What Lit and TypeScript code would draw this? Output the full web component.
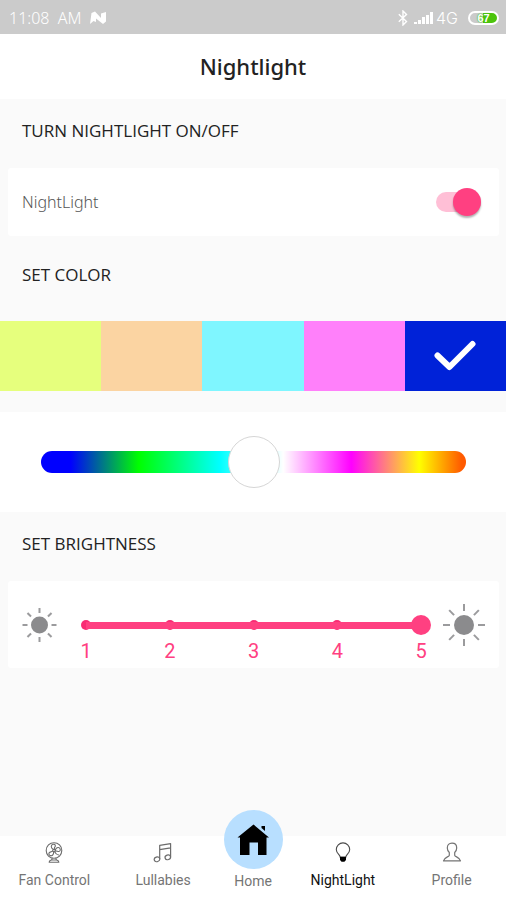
import { LitElement, html, svg, css } from "lit";
import { customElement, state } from "lit/decorators.js";
import { classMap } from "lit/directives/class-map.js";

const ray = (angle: number, inner: number, outer: number) => {
  const a = (angle * Math.PI) / 180;
  return svg`<line x1=${Math.cos(a) * inner} y1=${Math.sin(a) * inner} x2=${Math.cos(a) * outer} y2=${Math.sin(a) * outer}></line>`;
};

const sun = (size: number, core: number, inner: number, outer: number) => html`
  <svg class="sun" width=${size} height="44" viewBox="${-size / 2} -22 ${size} 44" aria-hidden="true">
    <circle r=${core} fill="#8b8b8d"></circle>
    <g stroke="#9b9b9d" stroke-width="2">
      ${[0, 45, 90, 135, 180, 225, 270, 315].map((a) => ray(a, inner, outer))}
    </g>
  </svg>
`;

const icons = {
  fan: svg`
    <g fill="none" stroke="#6c6c6c" stroke-width="1.1" stroke-linejoin="round" stroke-linecap="round">
      <circle cx="10" cy="8.5" r="7.8"></circle>
      <circle cx="10" cy="8.5" r="1.3"></circle>
      <path d="M9.2 7.4C6.4 5.6 6.8 2.6 9.4 2.2c2-.2 2.6 1.8 1.2 3.2L10.3 7.2"></path>
      <path d="M11.2 8c1.2-3 4.2-3.2 5-1 .6 1.9-1 2.9-2.8 2.2L11.3 8.9"></path>
      <path d="M9.6 9.8c.4 3.2-2 4.8-3.9 3.5-1.6-1.2-.8-3 1-3.4l2.1-.8"></path>
      <path d="M10.6 9.8c1 2 2.4 3 4 3.2"></path>
      <path d="M8.2 16.2 7.6 18M11.8 16.2l.6 1.8M5.2 20.3c.2-1.6 1.2-2.3 2.6-2.3h4.4c1.4 0 2.4.7 2.6 2.3z"></path>
    </g>`,
  notes: svg`
    <g fill="none" stroke="#6c6c6c" stroke-width="1.2" stroke-linejoin="round">
      <ellipse cx="4" cy="17.3" rx="2.8" ry="2.3" transform="rotate(-20 4 17.3)"></ellipse>
      <ellipse cx="14.8" cy="15.3" rx="2.8" ry="2.3" transform="rotate(-20 14.8 15.3)"></ellipse>
      <path d="M6.7 17V3.4L17.6 1.6V15M6.7 7.6 17.6 5.8"></path>
    </g>`,
  bulb: svg`
    <path d="M7.2 15.2C7 12.4 3.3 11.6 3.3 7.6a6.7 6.7 0 0 1 13.4 0c0 4-3.7 4.8-3.9 7.6z" fill="none" stroke="#4a4a4a" stroke-width="1.1"></path>
    <path d="M7 14.8h6v3.2l-1.6 1.8H8.6L7 18z" fill="#000"></path>`,
  person: svg`
    <path d="M10 1.2c-3 0-4.7 2-4.7 4.7 0 2 .8 3.4 2 4.6v2.8c-.3 1.5-5 2-5.8 5.500h17c-.8-3.500-5.500-4-5.800-5.500v-2.800c1.200-1.200 2-2.600 2-4.600 0-2.700-1.700-4.700-4.700-4.700z" fill="none" stroke="#747474" stroke-width="1.2" stroke-linejoin="round"></path>`,
};

type Icon = keyof typeof icons;

@customElement("app-root")
export class AppRoot extends LitElement {
  static styles = css`
    :host {
      display: block;
      font-family: "Noto Sans", sans-serif;
      color: #222;
    }
    * {
      box-sizing: border-box;
    }
    input {
      appearance: none;
      -webkit-appearance: none;
      margin: 0;
      background: none;
    }
    svg {
      display: block;
      flex: none;
    }
    .page {
      display: flex;
      flex-direction: column;
      min-height: 100vh;
      background: #fafafa;
    }

    .status {
      display: flex;
      align-items: center;
      height: 34px;
      padding: 2px 7px 0 9px;
      background: #cbcbcb;
      color: #fff;
      font-size: 16px;
      line-height: 20px;
    }
    .clock {
      margin-right: 9px;
      font-weight: 300;
      white-space: pre;
    }
    .spacer {
      flex: 1;
    }
    .signal {
      margin: 0 3px 0 6px;
    }
    .network {
      font-family: Inter, sans-serif;
      font-weight: 300;
      margin-right: 10px;
    }
    .battery {
      width: 31px;
      height: 14px;
      border: 2px solid #fff;
      border-radius: 7px;
      background: linear-gradient(90deg, #cbcbcb 13px, #4cc40c 13px);
      font: 700 11px/10px "Liberation Sans", sans-serif;
      text-align: center;
      text-shadow: 0 0 1px #4cc40c, 0 0 2px #4cc40c;
    }

    .header {
      display: flex;
      align-items: center;
      justify-content: center;
      height: 65px;
      padding-bottom: 2px;
      background: #fff;
    }
    .title {
      margin: 0;
      font-size: 22px;
      line-height: 30px;
      font-weight: 500;
    }
    .heading {
      margin: 0;
      padding: 19px 22px 0;
      font-size: 17px;
      line-height: 25px;
      font-weight: 400;
      font-family: "Open Sans", sans-serif;
    }
    .card {
      margin: 0 7px 0 8px;
      background: #fff;
      border-radius: 3px;
    }

    .toggle {
      display: flex;
      align-items: center;
      justify-content: space-between;
      height: 68px;
      margin-top: 25px;
      margin-bottom: 7px;
      padding: 0 18px 0 14px;
    }
    .toggle-label {
      font-size: 16px;
      line-height: 24px;
      font-weight: 300;
      color: #555;
    }
    .switch {
      position: relative;
      display: flex;
      align-items: center;
      width: 45px;
      height: 28px;
    }
    .switch::before {
      content: "";
      width: 100%;
      height: 20px;
      border-radius: 10px;
      background: #ccc;
    }
    .switch::after {
      content: "";
      position: absolute;
      left: 0;
      top: 0;
      width: 28px;
      height: 28px;
      border-radius: 50%;
      background: #f1f1f1;
      box-shadow: 0 2px 2px rgba(0, 0, 0, 0.3);
    }
    .switch:checked::before {
      background: #ffbfd6;
    }
    .switch:checked::after {
      left: auto;
      right: 0;
      background: #ff4081;
    }

    .swatches {
      display: grid;
      grid-template-columns: repeat(5, 1fr);
      margin: 34px 0 21px;
      padding: 0;
      border: 0;
    }
    .swatch {
      display: grid;
      grid-template-rows: 70px;
      place-items: center;
    }
    .swatch > * {
      grid-area: 1 / 1;
    }
    .swatch-input {
      width: 100%;
      height: 100%;
    }

    .hue-panel {
      display: flex;
      align-items: center;
      height: 100px;
      padding: 0 40px 0 41px;
      background: #fff;
    }
    .hue {
      width: 100%;
      height: 52px;
    }
    .hue::-webkit-slider-runnable-track {
      height: 22px;
      border-radius: 11px;
      background: linear-gradient(
        90deg,
        #00f 7%,
        #0f0 23%,
        #0ff 42%,
        #fff 57%,
        #f0f 73%,
        #ff0 89%,
        #ff5a00 99%
      );
    }
    .hue::-webkit-slider-thumb {
      -webkit-appearance: none;
      width: 52px;
      height: 52px;
      margin-top: -15px;
      border: 1px solid #d6d6d6;
      border-radius: 50%;
      background: #fff;
    }

    .brightness {
      display: flex;
      align-items: flex-start;
      height: 87px;
      margin-top: 25px;
      padding: 22px 14px 0;
    }
    .scale {
      flex: 1;
      margin: 6px 12px 0 19px;
    }
    .ticks {
      display: grid;
    }
    .ticks > * {
      grid-area: 1 / 1;
    }
    .dots,
    .numbers {
      display: flex;
      justify-content: space-between;
      align-items: center;
    }
    .dots {
      padding: 0 5px;
      pointer-events: none;
    }
    .dot {
      width: 10px;
      height: 10px;
      border-radius: 50%;
      background: #f92c74;
    }
    .level {
      width: 100%;
      height: 32px;
    }
    .level::-webkit-slider-runnable-track {
      height: 7px;
      background: linear-gradient(#ff4081, #ff4081) center / calc(100% - 20px) 100% no-repeat;
    }
    .level::-webkit-slider-thumb {
      -webkit-appearance: none;
      width: 20px;
      height: 20px;
      margin-top: -7px;
      border-radius: 50%;
      background: #ff4081;
    }
    .number {
      width: 20px;
      text-align: center;
      font-family: Roboto, sans-serif;
      font-size: 20px;
      line-height: 20px;
      color: #ff4081;
    }

    .nav {
      display: grid;
      grid-template-columns: 1fr 1fr 71px 1fr 1fr;
      height: 64px;
      margin-top: auto;
      background: #fff;
      font-family: Roboto, sans-serif;
      font-size: 14px;
      line-height: 20px;
    }
    .tab {
      display: flex;
      flex-direction: column;
      align-items: center;
      gap: 6px;
      padding-top: 6px;
      color: #757575;
      text-decoration: none;
    }
    .tab.active {
      color: #111;
    }
    .home {
      gap: 2px;
      padding-top: 0;
      margin-top: -26px;
    }
    .home-disc {
      display: grid;
      place-items: center;
      width: 59px;
      height: 59px;
      border-radius: 50%;
      background: #b8dfff;
    }
  `;

  @state() private on = true;
  @state() private selected = 4;
  @state() private active = "NightLight";

  private colors = [
    { name: "Lime", value: "#e6ff7d" },
    { name: "Peach", value: "#fbd4a2" },
    { name: "Aqua", value: "#7ff6ff" },
    { name: "Pink", value: "#ff80fa" },
    { name: "Blue", value: "#0022d8" },
  ];

  private tab(label: string, icon: Icon) {
    return html`<a
      href="#"
      class=${classMap({ tab: true, active: this.active === label })}
      @click=${() => (this.active = label)}
    >
      <svg width="20" height="22" viewBox="0 0 20 22" aria-hidden="true">${icons[icon]}</svg>
      <span>${label}</span>
    </a>`;
  }

  render() {
    return html`
      <div class="page">
        <div class="status">
          <span class="clock">11:08  AM</span>
          <svg width="17" height="14" viewBox="0 0 17 14" aria-hidden="true">
            <path d="M0 13 1.500 2 5 .5 11 7V2.500L16 1v9.500L13 13 6 7.500V11l-2.500-1z" fill="#fff"></path>
          </svg>
          <span class="spacer"></span>
          <svg width="10" height="16" viewBox="0 0 10 16" aria-hidden="true">
            <path d="M.8 4.300 8.500 11.500 5 15V1l3.500 3.500L.8 11.700" fill="none" stroke="#fff" stroke-width="1.400"></path>
          </svg>
          <svg class="signal" width="19" height="14" viewBox="0 0 19 14" aria-hidden="true">
            <path d="M0 11h3v2H0zM4 9h3v4H4zM8 6h3v7H8zM12 4h3v9h-3zM16 1h3v12h-3z" fill="#fff"></path>
          </svg>
          <span class="network">4G</span>
          <span class="battery">67</span>
        </div>

        <header class="header"><h1 class="title">Nightlight</h1></header>

        <h2 class="heading">TURN NIGHTLIGHT ON/OFF</h2>
        <div class="card toggle">
          <label class="toggle-label" for="power">NightLight</label>
          <input
            class="switch"
            id="power"
            type="checkbox"
            role="switch"
            .checked=${this.on}
            @change=${(e: Event) => (this.on = (e.target as HTMLInputElement).checked)}
          />
        </div>

        <h2 class="heading">SET COLOR</h2>
        <fieldset class="swatches" aria-label="Preset colors">
          ${this.colors.map(
            (c, i) => html`<label class="swatch" style="background:${c.value}">
              <input
                class="swatch-input"
                type="radio"
                name="color"
                aria-label=${c.name}
                .checked=${this.selected === i}
                @change=${() => (this.selected = i)}
              />
              ${this.selected === i
                ? html`<svg width="42" height="32" viewBox="0 0 42 32" aria-hidden="true">
                    <path d="M3.500 15.500 15.500 27 38.500 4" fill="none" stroke="#fff" stroke-width="6" stroke-linecap="round" stroke-linejoin="round"></path>
                  </svg>`
                : ""}
            </label>`
          )}
        </fieldset>
        <div class="hue-panel">
          <input class="hue" type="range" min="0" max="100" value="50" aria-label="Hue" />
        </div>

        <h2 class="heading">SET BRIGHTNESS</h2>
        <div class="card brightness">
          ${sun(35, 8.5, 12, 17)}
          <div class="scale">
            <div class="ticks">
              <div class="dots">${[1, 2, 3, 4, 5].map(() => html`<span class="dot"></span>`)}</div>
              <input class="level" type="range" min="1" max="5" value="5" aria-label="Brightness" />
            </div>
            <div class="numbers">
              ${[1, 2, 3, 4, 5].map((n) => html`<span class="number">${n}</span>`)}
            </div>
          </div>
          ${sun(42, 10, 14, 21)}
        </div>

        <nav class="nav">
          ${this.tab("Fan Control", "fan")} ${this.tab("Lullabies", "notes")}
          <a class="tab home" href="#" @click=${() => (this.active = "Home")}>
            <span class="home-disc">
              <svg width="33" height="33" viewBox="0 0 33 33" aria-hidden="true">
                <path d="M16.500 1.500 32 14.500h-2.500V32H21V19.500h-8.500V32H3V14.500H.5z" fill="#000"></path>
                <path d="M24.500 3h3.500v5l-3.500-3z" fill="#000"></path>
              </svg>
            </span>
            <span>Home</span>
          </a>
          ${this.tab("NightLight", "bulb")} ${this.tab("Profile", "person")}
        </nav>
      </div>
    `;
  }
}
